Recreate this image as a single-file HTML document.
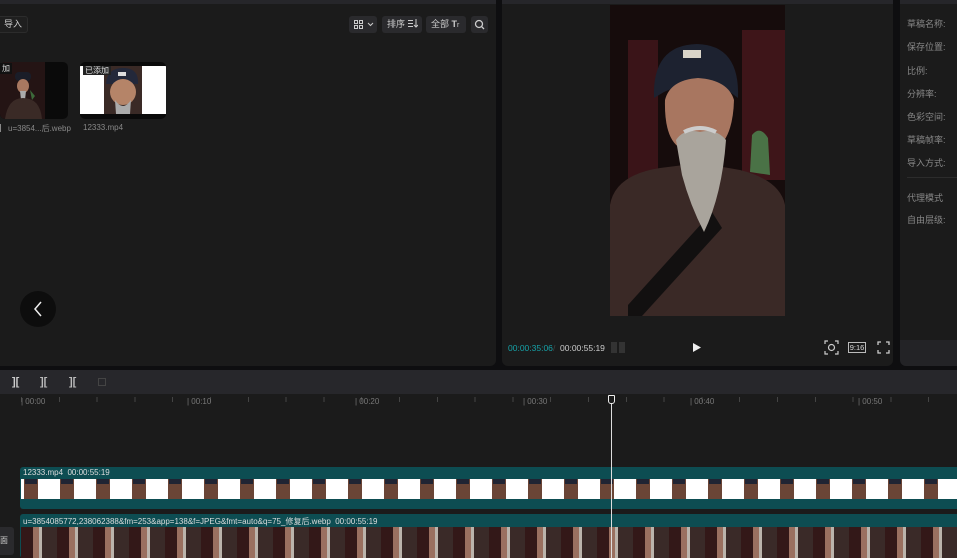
<!DOCTYPE html>
<html><head><meta charset="utf-8"><style>
*{margin:0;padding:0;box-sizing:border-box}
body{width:957px;height:558px;background:#0e0e10;position:relative;overflow:hidden;font-family:"Liberation Sans","Noto Sans CJK SC",sans-serif;color:#bbb;font-size:9px}
.abs{position:absolute}
.btn{position:absolute;top:16px;height:17px;background:#2a2a2d;border-radius:3px;color:#ccc;font-size:9px;line-height:17px;padding:0 6px;white-space:nowrap}
.tl{position:absolute;font-size:8px;color:#777}
.rp{position:absolute;left:907px;font-size:9px;color:#888}
</style></head><body>
<div class="abs" style="left:0;top:0;width:496px;height:366px;background:#1b1b1b;border-radius:0 0 6px 0"></div>
<div class="abs" style="left:0;top:0;width:496px;height:4px;background:#26262a"></div>
<div class="abs" style="left:-4px;top:16px;width:32px;height:17px;border:1px solid #2c2c2c;border-radius:3px;background:#1f1f1f;color:#ccc;line-height:15px;padding-left:7px">导入</div>
<div class="btn" style="left:349px;width:28px;padding:0"><svg width="28" height="17"><g fill="none" stroke="#ccc" stroke-width="1"><rect x="5.5" y="4.5" width="3" height="3"/><rect x="10.5" y="4.5" width="3" height="3"/><rect x="5.5" y="9.5" width="3" height="3"/><rect x="10.5" y="9.5" width="3" height="3"/><path d="M19 7l2.5 2.5L24 7"/></g></svg></div>
<div class="btn" style="left:382px;width:40px;padding:0 0 0 5px">排序 <svg width="10" height="9" style="vertical-align:-1px"><path d="M0 1.5h5M0 4.5h5M0 7.5h5M8 0v8M6 6l2 2 2-2" stroke="#ccc" fill="none"/></svg></div>
<div class="btn" style="left:426px;width:40px;padding:0 0 0 5px">全部 <b>T</b><span style="font-size:7px">r</span></div>
<div class="btn" style="left:471px;width:17px;padding:0"><svg width="17" height="17"><circle cx="8" cy="8" r="3.5" fill="none" stroke="#ccc" stroke-width="1.3"/><path d="M10.6 10.6L13 13" stroke="#ccc" stroke-width="1.3"/></svg></div>
<div class="abs" style="left:0;top:62px;width:68px;height:57px;background:#0a0a0a;border-radius:5px;overflow:hidden"><svg width="68" height="57"><rect x="0" y="0" width="45" height="57" fill="#241414"/><rect x="15" y="10" width="16" height="9" fill="#1a1d28" rx="4"/><ellipse cx="23" cy="24" rx="6" ry="7" fill="#a87860"/><path d="M20 29h6l-2 18h-2z" fill="#aaa"/><path d="M5 57 Q8 36 23 36 Q40 36 42 57z" fill="#3a2a26"/><path d="M30 28 l5 6 -3 4z" fill="#3c6a3a"/></svg></div>
<div class="abs" style="left:0;top:63px;font-size:8px;color:#ddd;background:#111;padding:0 2px">加</div>
<div class="abs" style="left:80px;top:62px;width:86px;height:57px;background:#0a0a0a;border-radius:5px;overflow:hidden"><svg width="86" height="57"><rect x="0" y="4" width="86" height="48" fill="#fff"/><rect x="24" y="4" width="38" height="48" fill="#3a2a26"/><path d="M26 22 Q27 6 43 6 Q59 6 58 22z" fill="#23283a"/><rect x="38" y="10" width="8" height="4" fill="#ddd"/><ellipse cx="43" cy="30" rx="13" ry="13" fill="#b58468"/><path d="M35 38 Q43 50 51 38 L50 52 H36z" fill="#aaa"/></svg></div>
<div class="abs" style="left:83px;top:66px;font-size:8px;color:#ddd;background:#222;padding:0 2px;line-height:9px">已添加</div>
<div class="abs" style="left:0;top:123px;font-size:8px;color:#888">▏u=3854...后.webp</div>
<div class="abs" style="left:83px;top:123px;font-size:8px;color:#888">12333.mp4</div>
<div class="abs" style="left:20px;top:291px;width:36px;height:36px;border-radius:50%;background:#0d0d0d"><svg width="36" height="36"><path d="M21 11l-6 7 6 7" stroke="#eee" stroke-width="1.5" fill="none"/></svg></div>
<div class="abs" style="left:502px;top:0;width:391px;height:366px;background:#1b1b1b;border-radius:0 0 6px 6px"></div>
<div class="abs" style="left:502px;top:0;width:391px;height:4px;background:#26262a"></div>
<svg class="abs" style="left:610px;top:5px" width="175" height="311" viewBox="610 5 175 311">
<rect x="610" y="5" width="175" height="311" fill="#160c0c"/>
<rect x="628" y="40" width="30" height="140" fill="#3a1418"/>
<rect x="742" y="30" width="43" height="150" fill="#3e1519"/>
<path d="M752 135 Q760 125 768 138 L770 175 L750 172z" fill="#4a7246"/>
<path d="M610 316 V205 Q615 175 660 168 L700 163 L740 170 Q780 180 785 205 V316z" fill="#3a2926"/>
<path d="M628 305 L712 212 L722 228 L642 316 L628 316z" fill="#121010"/>
<path d="M654 98 Q652 45 697 44 Q740 45 738 98 L730 92 Q700 75 664 92z" fill="#1d2230"/>
<rect x="683" y="50" width="18" height="8" fill="#d9d4c8"/>
<path d="M665 100 Q664 138 680 148 L715 150 Q733 138 734 100 Q728 80 698 78 Q670 80 665 100z" fill="#a87660"/>
<path d="M676 140 Q684 128 700 132 Q716 128 726 140 Q722 195 704 232 Q690 205 682 175z" fill="#a9a49c"/>
<path d="M684 132 Q700 124 716 132" stroke="#ccc" stroke-width="4" fill="none"/>
</svg>
<div class="abs" style="left:508px;top:343px;font-size:8.5px;color:#16a2a8">00:00:35:06</div>
<div class="abs" style="left:553px;top:343px;font-size:8.5px;color:#444">/</div>
<div class="abs" style="left:560px;top:343px;font-size:8.5px;color:#ccc">00:00:55:19</div>
<div class="abs" style="left:611px;top:342px;width:15px;height:11px;background:repeating-linear-gradient(90deg,#333 0 6px,transparent 6px 8px)"></div>
<svg class="abs" style="left:692px;top:342px" width="10" height="11"><path d="M1 1L9 5.5 1 10z" fill="#eee"/></svg>
<svg class="abs" style="left:824px;top:340px" width="15" height="15"><g stroke="#ccc" fill="none" stroke-width="1.2"><path d="M1 4V1h3M11 1h3v3M14 11v3h-3M4 14H1v-3"/><circle cx="7.5" cy="7.5" r="3"/></g></svg>
<div class="abs" style="left:848px;top:342px;width:18px;height:11px;border:1px solid #bbb;font-size:7.5px;line-height:9px;text-align:center;color:#ddd">9:16</div>
<svg class="abs" style="left:877px;top:341px" width="13" height="13"><path d="M1 4V1h3M9 1h3v3M12 9v3H9M4 12H1V9" stroke="#ccc" fill="none" stroke-width="1.3"/></svg>
<div class="abs" style="left:900px;top:0;width:57px;height:340px;background:#1b1b1b"></div>
<div class="abs" style="left:900px;top:340px;width:57px;height:26px;background:#232326;border-radius:0 0 0 6px"></div>
<div class="abs" style="left:900px;top:0;width:57px;height:4px;background:#26262a"></div>
<div class="rp" style="top:17px">草稿名称:</div>
<div class="rp" style="top:40px">保存位置:</div>
<div class="rp" style="top:64px">比例:</div>
<div class="rp" style="top:87px">分辨率:</div>
<div class="rp" style="top:110px">色彩空间:</div>
<div class="rp" style="top:133px">草稿帧率:</div>
<div class="rp" style="top:156px">导入方式:</div>
<div class="abs" style="left:907px;top:177px;width:50px;height:1px;background:#2c2c2c"></div>
<div class="rp" style="top:191px">代理模式</div>
<div class="rp" style="top:213px">自由层级:</div>
<div class="abs" style="left:0;top:370px;width:957px;height:188px;background:#1b1b1b"></div>
<div class="abs" style="left:0;top:370px;width:957px;height:24px;background:#27272b"></div>
<div class="abs" style="left:12px;top:376px;font-size:11px;color:#ccc;font-weight:bold">][</div>
<div class="abs" style="left:40px;top:376px;font-size:11px;color:#bbb;font-weight:bold">][</div>
<div class="abs" style="left:69px;top:376px;font-size:11px;color:#bbb;font-weight:bold">][</div>
<div class="abs" style="left:98px;top:378px;width:8px;height:8px;border:1px solid #444"></div>
<div class="abs" style="left:0;top:394px;width:957px;height:14px;background:repeating-linear-gradient(90deg,transparent 0 21px,#444 21px 22px,transparent 22px 37.8px) 0 3px/957px 5px no-repeat"></div>
<div class="tl" style="left:21px;top:397px">| 00:00</div>
<div class="tl" style="left:187px;top:397px">| 00:10</div>
<div class="tl" style="left:355px;top:397px">| 00:20</div>
<div class="tl" style="left:523px;top:397px">| 00:30</div>
<div class="tl" style="left:690px;top:397px">| 00:40</div>
<div class="tl" style="left:858px;top:397px">| 00:50</div>
<div class="abs" style="left:20px;top:467px;width:937px;height:42px;background:#0d4d52;border-radius:3px 0 0 3px"></div>
<div class="abs" style="left:23px;top:468px;font-size:8px;color:#ddd">12333.mp4 &nbsp;00:00:55:19</div>
<div class="abs" style="left:21px;top:479px;width:936px;height:20px;background:repeating-linear-gradient(180deg,transparent 0 20px),repeating-linear-gradient(90deg,#fff 0 3px,#6a4536 3px 17px,#fff 17px 36px)"></div>
<div class="abs" style="left:21px;top:479px;width:936px;height:5px;background:repeating-linear-gradient(90deg,transparent 0 4px,#202433 4px 16px,transparent 16px 36px)"></div>
<div class="abs" style="left:0;top:527px;width:14px;height:28px;background:#2a2a2d;border-radius:0 3px 3px 0;font-size:8px;color:#ccc;line-height:28px">面</div>
<div class="abs" style="left:20px;top:514px;width:937px;height:44px;background:#0d4d52;border-radius:3px 0 0 3px"></div>
<div class="abs" style="left:23px;top:516px;font-size:8px;color:#ddd">u=3854085772,238062388&amp;fm=253&amp;app=138&amp;f=JPEG&amp;fmt=auto&amp;q=75_修复后.webp &nbsp;00:00:55:19</div>
<div class="abs" style="left:21px;top:527px;width:936px;height:31px;background:repeating-linear-gradient(90deg,#331818 0 12px,#9a7060 12px 18px,#bbb4ac 18px 21px,#3a2a28 21px 36px)"></div>
<div class="abs" style="left:611px;top:400px;width:1px;height:158px;background:#ddd"></div>
<div class="abs" style="left:608px;top:395px;width:7px;height:9px;border:1.5px solid #eee;border-radius:1px 1px 3px 3px;background:#1b1b1b"></div>
</body></html>
